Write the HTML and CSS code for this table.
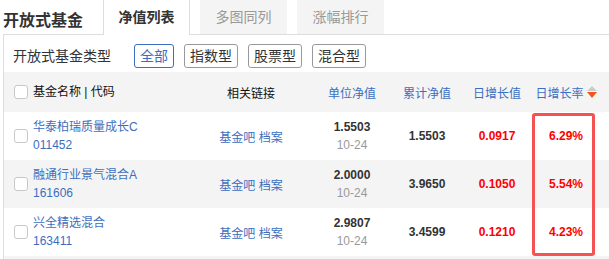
FILE: index.html
```html
<!DOCTYPE html>
<html lang="zh-CN">
<head>
<meta charset="utf-8">
<title>开放式基金</title>
<link rel="stylesheet" href="styles.css">
</head>
<body>
<div class="page">
  <div class="top">
    <div class="title">开放式基金</div>
    <div class="tabs">
      <div class="tab active">净值列表</div>
      <div class="tab">多图同列</div>
      <div class="tab">涨幅排行</div>
    </div>
  </div>
  <div class="panel">
    <div class="filter">
      <span class="filter-label">开放式基金类型</span>
      <div class="filter-btns">
        <span class="btn on">全部</span>
        <span class="btn">指数型</span>
        <span class="btn">股票型</span>
        <span class="btn">混合型</span>
      </div>
    </div>
    <div class="table">
      <div class="row head">
        <div class="c cb"><span class="box"></span></div>
        <div class="c name">基金名称 | 代码</div>
        <div class="c link">相关链接</div>
        <div class="c num blue">单位净值</div>
        <div class="c num blue">累计净值</div>
        <div class="c num blue">日增长值</div>
        <div class="c num blue">日增长率<span class="sort"><i class="up"></i><i class="down"></i></span></div>
        <div class="c"></div>
      </div>
      <div class="row">
        <div class="c cb"><span class="box"></span></div>
        <div class="c name"><a>华泰柏瑞质量成长C</a><a>011452</a></div>
        <div class="c link"><span><a>基金吧</a> <a>档案</a></span></div>
        <div class="c num two"><b>1.5503</b><span class="date">10-24</span></div>
        <div class="c num"><b>1.5503</b></div>
        <div class="c num"><b class="red">0.0917</b></div>
        <div class="c num"><b class="red">6.29%</b></div>
        <div class="c"></div>
      </div>
      <div class="row alt">
        <div class="c cb"><span class="box"></span></div>
        <div class="c name"><a>融通行业景气混合A</a><a>161606</a></div>
        <div class="c link"><span><a>基金吧</a> <a>档案</a></span></div>
        <div class="c num two"><b>2.0000</b><span class="date">10-24</span></div>
        <div class="c num"><b>3.9650</b></div>
        <div class="c num"><b class="red">0.1050</b></div>
        <div class="c num"><b class="red">5.54%</b></div>
        <div class="c"></div>
      </div>
      <div class="row">
        <div class="c cb"><span class="box"></span></div>
        <div class="c name"><a>兴全精选混合</a><a>163411</a></div>
        <div class="c link"><span><a>基金吧</a> <a>档案</a></span></div>
        <div class="c num two"><b>2.9807</b><span class="date">10-24</span></div>
        <div class="c num"><b>3.4599</b></div>
        <div class="c num"><b class="red">0.1210</b></div>
        <div class="c num"><b class="red">4.23%</b></div>
        <div class="c"></div>
      </div>
      <div class="row alt"></div>
    </div>
  </div>
  <div class="highlight"></div>
</div>
</body>
</html>
```

FILE: styles.css
```css
html, body {
  margin: 0;
  padding: 0;
  background: #fff;
  overflow: hidden;
}
body {
  width: 609px;
  height: 259px;
  font-family: "Liberation Sans", "Noto Sans CJK SC", sans-serif;
  color: #333;
}
.page {
  position: relative;
  width: 609px;
  height: 259px;
  overflow: hidden;
}
.top {
  display: flex;
  height: 34px;
  padding-left: 3px;
}
.title {
  width: 100px;
  font-size: 16px;
  font-weight: bold;
  line-height: 26px;
  padding-top: 8px;
  color: #333;
  white-space: nowrap;
}
.tabs {
  display: flex;
  gap: 10px;
}
.tab {
  width: 87px;
  height: 34px;
  box-sizing: border-box;
  text-align: center;
  font-size: 14px;
  line-height: 34px;
  background: #f4f4f4;
  color: #999;
}
.tab.active {
  background: #fff;
  color: #333;
  font-weight: bold;
  border-left: 1px solid #ddd;
  border-right: 1px solid #ddd;
  height: 35px;
  position: relative;
  z-index: 1;
}
.panel {
  margin-left: 3px;
  border-left: 1px solid #ddd;
  border-top: 1px solid #ddd;
  width: 605px;
}
.filter {
  display: flex;
  align-items: center;
  padding: 9px 0 4px 9px;
  height: 24px;
}
.filter-label {
  font-size: 14px;
  color: #333;
  line-height: 24px;
  width: 121px;
  white-space: nowrap;
}
.filter-btns {
  display: flex;
  gap: 10px;
}
.btn {
  display: block;
  height: 24px;
  box-sizing: border-box;
  padding: 0 5px;
  border: 1px solid #999;
  border-radius: 3px;
  font-size: 14px;
  line-height: 22px;
  color: #333;
}
.btn.on {
  border-color: #3c6ec0;
  color: #3c6ec0;
}
.table {
  font-size: 12px;
}
.row {
  display: grid;
  grid-template-columns: 29px 157px 122px 80px 70px 70px 68px 1fr;
  height: 48px;
  background: #fff;
}
.row.head {
  height: 40px;
  background: #f4f4f4;
  color: #111;
}
.row.alt {
  background: #f4f4f4;
}
.c {
  display: flex;
  align-items: center;
  white-space: nowrap;
}
.cb {
  padding-left: 10px;
}
.box {
  display: block;
  width: 14px;
  height: 14px;
  box-sizing: border-box;
  border: 1px solid #c8c8c8;
  border-radius: 3px;
  background: #fff;
}
.name {
  flex-direction: column;
  align-items: flex-start;
  justify-content: center;
  line-height: 18px;
}
.head .name {
  flex-direction: row;
  align-items: center;
  justify-content: flex-start;
}
a {
  color: #3c6ec0;
  text-decoration: none;
}
.link {
  justify-content: center;
  color: #111;
}
.num {
  justify-content: center;
}
.two {
  flex-direction: column;
  line-height: 18px;
}
.blue {
  color: #3c6ec0;
}
b {
  font-weight: bold;
  color: #333;
}
b.red {
  color: #f00;
}
.date {
  color: #999;
}
.sort {
  display: flex;
  flex-direction: column;
  gap: 1px;
  margin-left: 3px;
}
.sort i {
  display: block;
  width: 0;
  height: 0;
  border-left: 5.5px solid transparent;
  border-right: 5.5px solid transparent;
}
.sort .up {
  border-bottom: 5px solid #ccc;
}
.sort .down {
  border-top: 6px solid #f3541c;
}
.highlight {
  position: absolute;
  left: 532px;
  top: 113px;
  width: 63px;
  height: 143px;
  box-sizing: border-box;
  border: 3px solid #f55353;
  border-radius: 3px;
}
```
